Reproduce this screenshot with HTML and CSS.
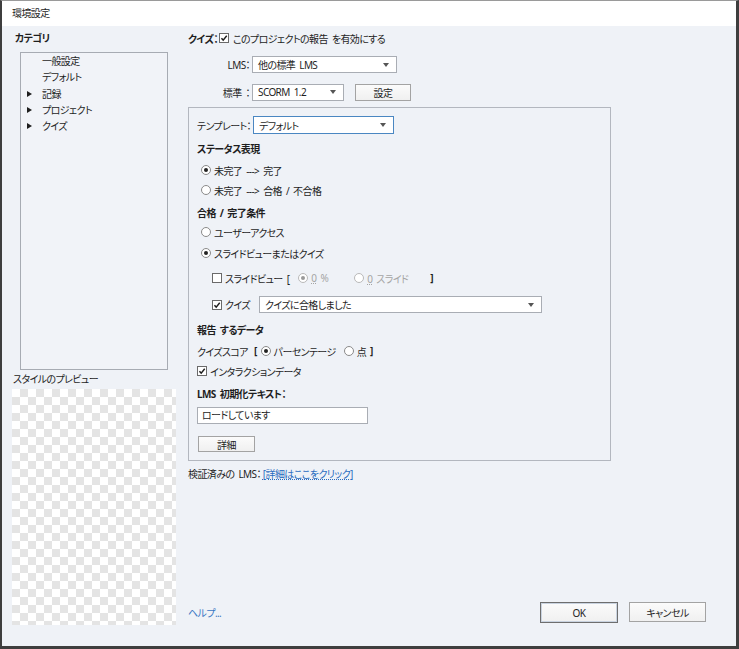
FILE: index.html
```html
<!DOCTYPE html>
<html lang="ja">
<head>
<meta charset="utf-8">
<title>環境設定</title>
<link rel="stylesheet" href="styles.css">
</head>
<body>
<div class="dialog">
  <div class="titlebar">環境設定</div>
  <div class="main">
    <div class="left">
      <div class="cat-label">カテゴリ</div>
      <div class="catlist">
        <div class="cat-item">一般設定</div>
        <div class="cat-item">デフォルト</div>
        <div class="cat-item"><span class="tri"></span>記録</div>
        <div class="cat-item"><span class="tri"></span>プロジェクト</div>
        <div class="cat-item"><span class="tri"></span>クイズ</div>
      </div>
      <div class="preview-label">スタイルのプレビュー</div>
      <div class="checker"></div>
    </div>
    <div class="right">
      <div class="row r-top">
        <span class="bold">クイズ：</span>
        <span class="cb checked"><svg viewBox="0 0 10 10"><path d="M1.8 5.2 L4 7.6 L8.4 2.2"/></svg></span>
        <span class="ml3">このプロジェクトの報告 を有効にする</span>
      </div>
      <div class="row r-lms">
        <span class="flabel">LMS：</span>
        <div class="select w-lms"><span>他の標準 LMS</span><span class="arrow"></span></div>
      </div>
      <div class="row r-std">
        <span class="flabel">標準 ：</span>
        <div class="select w-std"><span>SCORM 1.2</span><span class="arrow"></span></div>
        <div class="btn btn-set">設定</div>
      </div>
      <div class="panel">
        <div class="row r-tpl">
          <span class="tlabel">テンプレート：</span>
          <div class="select w-tpl focus"><span>デフォルト</span><span class="arrow"></span></div>
        </div>
        <div class="row h bold mt7">ステータス表現</div>
        <div class="row mt8"><span class="rb on"></span><span class="rt">未完了 ---&gt; 完了</span></div>
        <div class="row mt6"><span class="rb"></span><span class="rt">未完了 ---&gt; 合格 / 不合格</span></div>
        <div class="row h bold mt8">合格 / 完了条件</div>
        <div class="row mt6"><span class="rb"></span><span class="rt">ユーザーアクセス</span></div>
        <div class="row mt7"><span class="rb on"></span><span class="rt">スライドビューまたはクイズ</span></div>
        <div class="row mt11 indent">
          <span class="cb"></span><span class="ct">スライドビュー [</span>
          <span class="rb on dis r-pct"></span><span class="rt dis"><u>0</u> %</span>
          <span class="rb dis r-sl"></span><span class="rt dis"><u>0</u> スライド</span>
          <span class="br-end">]</span>
        </div>
        <div class="row r-quiz indent">
          <span class="cb checked"><svg viewBox="0 0 10 10"><path d="M1.8 5.2 L4 7.6 L8.4 2.2"/></svg></span><span class="ct">クイズ</span>
          <div class="select w-quiz"><span>クイズに合格しました</span><span class="arrow"></span></div>
        </div>
        <div class="row h bold mt9">報告 するデータ</div>
        <div class="row mt8">
          <span>クイズスコア</span><span class="brk">[</span>
          <span class="rb on"></span><span class="rt">パーセンテージ</span>
          <span class="rb r-pt"></span><span class="rt">点</span><span class="brk2">]</span>
        </div>
        <div class="row mt6"><span class="cb checked"><svg viewBox="0 0 10 10"><path d="M1.8 5.2 L4 7.6 L8.4 2.2"/></svg></span><span class="ct">インタラクションデータ</span></div>
        <div class="row h bold mt8">LMS 初期化テキスト：</div>
        <div class="input">ロードしています</div>
        <div class="btn btn-detail">詳細</div>
      </div>
      <div class="row r-verified">
        <span>検証済みの LMS：</span><a class="link">[詳細はここをクリック]</a>
      </div>
      <div class="spacer"></div>
      <div class="footer">
        <a class="help">ヘルプ...</a>
        <div class="btns">
          <div class="btn btn-ok">OK</div>
          <div class="btn btn-cancel">キャンセル</div>
        </div>
      </div>
    </div>
  </div>
</div>
</body>
</html>
```

FILE: styles.css
```css
* { box-sizing: border-box; }
html, body { margin: 0; padding: 0; }
body {
  font-family: "Noto Sans", "Noto Sans CJK JP", sans-serif;
  font-size: 10px;
  letter-spacing: -0.6px;
  word-spacing: 2px;
  color: #1e1e1e;
  font-feature-settings: "palt";
  background: #fff;
}
.dialog {
  width: 739px;
  height: 649px;
  border-top: 1px solid #9a9a9a;
  border-left: 2px solid #3e3e3e;
  border-right: 3px solid #3e3e3e;
  border-bottom: 3px solid #3e3e3e;
  background: #eff2f7;
  display: flex;
  flex-direction: column;
}
.titlebar {
  height: 25px;
  line-height: 24px;
  background: #fff;
  padding-left: 10px;
  flex: none;
}
.main {
  flex: 1;
  display: flex;
}
.left {
  width: 186px;
  padding-left: 10px;
  flex: none;
}
.cat-label {
  font-weight: bold;
  margin: 5px 0 0 3px;
  height: 14px;
  line-height: 14px;
}
.catlist {
  margin: 7px 0 0 8px;
  width: 148px;
  height: 318px;
  border: 1px solid #a7abb3;
  background: #f1f3f8;
  padding-top: 0;
}
.cat-item {
  height: 16.3px;
  line-height: 16px;
  padding-left: 21px;
  position: relative;
}
.tri {
  position: absolute;
  left: 6px;
  top: 5px;
  width: 0;
  height: 0;
  border-left: 5px solid #1e1e1e;
  border-top: 3px solid transparent;
  border-bottom: 3px solid transparent;
}
.preview-label {
  margin: 2px 0 0 1px;
  height: 14px;
  line-height: 14px;
}
.checker {
  margin-top: 3px;
  width: 164px;
  height: 236px;
  background-color: #ffffff;
  background-image: conic-gradient(#e4e4e4 25%, transparent 0 50%, #e4e4e4 0 75%, transparent 0);
  background-size: 16px 16px;
}
.right {
  flex: 1;
  display: flex;
  flex-direction: column;
  padding-right: 30px;
}
.row {
  display: flex;
  align-items: center;
  height: 14px;
  white-space: nowrap;
}
.bold { font-weight: bold; }
.ml3 { margin-left: 4px; }
.r-top { margin-top: 5px; }
.r-top .cb { margin-left: 1px; }
.r-lms { margin-top: 11px; height: 17px; }
.r-std { margin-top: 10px; height: 18px; }
.flabel {
  width: 64px;
  text-align: right;
  padding-right: 2px;
  flex: none;
}
.select {
  height: 17px;
  border: 1px solid #a9adb4;
  background: #fff;
  display: flex;
  align-items: center;
  padding-left: 5px;
  flex: none;
}
.select.focus { border-color: #4a87c2; height: 18px; }
.arrow {
  margin-left: auto;
  margin-right: 7px;
  width: 0;
  height: 0;
  border-top: 4px solid #555;
  border-left: 3px solid transparent;
  border-right: 3px solid transparent;
}
.w-lms { width: 145px; }
.w-std { width: 92px; }
.w-tpl { width: 141px; }
.w-quiz { width: 283px; margin-left: 9px; }
.btn {
  border: 1px solid #a3a3a3;
  background: linear-gradient(#fbfbfb, #f0f0f0);
  display: flex;
  align-items: center;
  justify-content: center;
  flex: none;
}
.btn-set { width: 56px; height: 17px; margin-left: 11px; margin-top: 1px; }
.panel {
  margin-top: 6px;
  width: 423px;
  height: 354px;
  border: 1px solid #b3b7bf;
  padding-left: 8px;
  flex: none;
}
.r-tpl { margin-top: 8px; height: 18px; }
.tlabel { min-width: 55px; flex: none; margin-right: 1px; }
.mt6 { margin-top: 6px; }
.mt7 { margin-top: 7px; }
.mt8 { margin-top: 8px; }
.mt9 { margin-top: 9px; }
.mt11 { margin-top: 11px; }
.indent { padding-left: 15px; }
.rb {
  width: 10px;
  height: 10px;
  border: 1px solid #8a8a8a;
  border-radius: 50%;
  background: #fff;
  display: inline-flex;
  align-items: center;
  justify-content: center;
  margin-left: 4px;
  flex: none;
}
.rb.on::after {
  content: "";
  width: 4px;
  height: 4px;
  border-radius: 50%;
  background: #222;
}
.rb.dis { border-color: #b9b9b9; }
.rb.dis.on::after { background: #9a9a9a; }
.rt { margin-left: 3px; }
.rt.dis { color: #a5a5a5; }
.rt u { text-decoration-style: dotted; }
.cb {
  width: 10px;
  height: 10px;
  border: 1px solid #6a6a6a;
  background: #fff;
  display: inline-flex;
  flex: none;
}
.cb svg { width: 100%; height: 100%; overflow: visible; }
.cb svg path { fill: none; stroke: #1e1e1e; stroke-width: 1.8; }
.ct { margin-left: 3px; }
.r-pct { margin-left: 9px; }
.r-sl { margin-left: 26px; }
.br-end { margin-left: 22px; font-weight: bold; }
.r-quiz { margin-top: 11px; height: 17px; }
.brk { margin-left: 6px; font-weight: bold; }
.brk2 { margin-left: 4px; font-weight: bold; }
.r-pt { margin-left: 8px; }
.input {
  margin-top: 7px;
  width: 171px;
  height: 17px;
  border: 1px solid #a9adb4;
  background: #fff;
  padding-left: 4px;
  line-height: 15px;
}
.btn-detail {
  margin-top: 12px;
  margin-left: 1px;
  width: 57px;
  height: 16px;
}
.r-verified { margin-top: 5px; }
.link {
  color: #2a6cc0;
  text-decoration: underline dotted;
  margin-left: 2px;
}
.spacer { flex: 1; }
.footer {
  display: flex;
  align-items: center;
  height: 21px;
  margin-bottom: 23px;
}
.help { color: #3b78c4; }
.btns {
  margin-left: auto;
  display: flex;
  align-items: flex-start;
  gap: 11px;
  height: 21px;
}
.btn-ok {
  width: 78px;
  height: 21px;
  border: 1px solid #6e6e6e;
  box-shadow: inset 0 0 0 1px #c9d3e0;
}
.btn-cancel {
  width: 77px;
  height: 20px;
}
```
